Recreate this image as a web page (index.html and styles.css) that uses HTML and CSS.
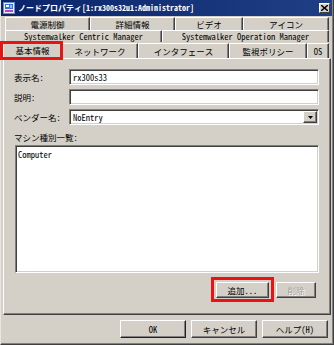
FILE: index.html
```html
<!DOCTYPE html>
<html lang="ja">

<head>
  <meta charset="UTF-8">
  <meta name="viewport" content="width=device-width, initial-scale=1.0">
  <title>ノードプロパティ</title>
  <link rel="stylesheet" href="styles.css">
</head>

<body>
  <div class="window">
    <div class="titlebar">
      <svg class="app-icon" width="12" height="12" viewBox="0 0 12 12">
        <rect x="0.5" y="0.5" width="11" height="11" fill="#e8eef8" stroke="#6a8cc8"/>
        <rect x="2" y="2" width="8" height="5" fill="#3a6ee0"/>
        <rect x="3" y="3" width="3" height="2" fill="#ffffff"/>
        <rect x="2" y="8" width="8" height="2" fill="#c040c0"/>
        <rect x="7" y="3" width="2" height="3" fill="#60d0ff"/>
      </svg>
      <span class="title">ノードプロパティ[1:rx300s32u1:Administrator]</span>
      <span class="close">
        <svg width="7" height="6" viewBox="0 0 7 6">
          <path d="M0 0 L7 6 M7 0 L0 6" stroke="#000" stroke-width="1.4"/>
        </svg>
      </span>
    </div>

    <div class="tabs">
      <div class="tab-row row-top">
        <div class="tab tab-power">電源制御</div>
        <div class="tab tab-detail">詳細情報</div>
        <div class="tab tab-video">ビデオ</div>
        <div class="tab tab-icon">アイコン</div>
      </div>
      <div class="tab-row row-mid">
        <div class="tab tab-centric">Systemwalker Centric Manager</div>
        <div class="tab tab-operation">Systemwalker Operation Manager</div>
      </div>
      <div class="tab-row row-front">
        <div class="tab tab-basic active marked">基本情報</div>
        <div class="tab tab-network">ネットワーク</div>
        <div class="tab tab-interface">インタフェース</div>
        <div class="tab tab-policy">監視ポリシー</div>
        <div class="tab tab-os">OS</div>
      </div>
    </div>

    <div class="panel">
      <div class="field">
        <label>表示名:</label>
        <div class="input">rx300s33</div>
      </div>
      <div class="field">
        <label>説明:</label>
        <div class="input"></div>
      </div>
      <div class="field">
        <label>ベンダー名:</label>
        <div class="input combo">
          <span>NoEntry</span>
          <span class="drop">
            <svg width="5" height="3" viewBox="0 0 5 3"><path d="M0 0 H5 L2.5 3 Z" fill="#000"/></svg>
          </span>
        </div>
      </div>
      <div class="list-label">マシン種別一覧:</div>
      <div class="listbox">Computer</div>
      <div class="list-actions">
        <button class="btn marked">追加...</button>
        <button class="btn disabled">削除</button>
      </div>
    </div>

    <div class="footer">
      <button class="btn btn-ok">OK</button>
      <button class="btn">キャンセル</button>
      <button class="btn">ヘルプ(H)</button>
    </div>
  </div>
</body>

</html>
```

FILE: styles.css
```css
body {
  margin: 0;
  padding: 0;
  background: #d4d0c8;
}

.window {
  width: 334px;
  height: 345px;
  box-sizing: border-box;
  background: #d4d0c8;
  border: 1px solid;
  border-top: 0;
  border-color: #d4d0c8 #404040 #404040 #e8e6e0;
  box-shadow: inset -1px -1px #808080;
  display: flex;
  flex-direction: column;
  font-family: "Noto Sans Mono CJK JP", "Noto Sans CJK JP", monospace;
  font-size: 8.5px;
  color: #000;
}

/* title bar */
.titlebar {
  height: 16px;
  margin-right: 1px;
  background: linear-gradient(90deg, #0a246a, #1f3f85);
  display: flex;
  align-items: center;
  padding-left: 2px;
  gap: 3px;
}

.title {
  flex: 1;
  color: #fff;
  font-weight: bold;
  font-size: 8px;
  line-height: 16px;
  white-space: nowrap;
}

.close {
  width: 11px;
  height: 10px;
  margin-right: 2px;
  box-sizing: border-box;
  background: #d4d0c8;
  border: 1px solid;
  border-color: #fff #404040 #404040 #fff;
  display: flex;
  align-items: center;
  justify-content: center;
}

/* tabs */
.tabs {
  margin: 1px 2px 0 2px;
  display: flex;
  flex-direction: column;
}

.tab-row {
  display: flex;
}

.row-top {
  height: 13px;
  margin-left: 2px;
}

.row-mid {
  height: 12px;
  margin-left: 2px;
}

.row-front {
  height: 16px;
}

.tab {
  box-sizing: border-box;
  border-top: 1px solid #fff;
  border-left: 1px solid #fff;
  border-right: 1px solid #404040;
  box-shadow: inset -1px 0 #808080;
  display: flex;
  align-items: center;
  justify-content: center;
  white-space: nowrap;
  line-height: 1;
}

.tab-power { width: 85px; }
.tab-detail { width: 85px; }
.tab-video { width: 68px; }
.tab-icon { width: 86px; }
.tab-centric { width: 157px; }
.tab-operation { width: 167px; }
.tab-basic { width: 59px; }
.tab-network { width: 76px; margin-top: 1px; }
.tab-interface { width: 91px; margin-top: 1px; }
.tab-policy { width: 78px; margin-top: 1px; }
.tab-os { width: 22px; margin-top: 1px; }

.tab.active {
  margin-top: -1px;
  height: 18px;
  position: relative;
  z-index: 1;
  background: #d4d0c8;
}

/* red highlight marks */
.marked {
  position: relative;
}

.marked::after {
  content: "";
  position: absolute;
  border: 3px solid #e81414;
  pointer-events: none;
}

.tab.marked::after {
  left: -4px;
  right: -2px;
  top: -1px;
  bottom: -1px;
}

.btn.marked::after {
  left: -6px;
  right: -6px;
  top: -6px;
  bottom: -5px;
}

/* panel */
.panel {
  height: 257px;
  box-sizing: border-box;
  margin: 0 2px;
  border: 1px solid;
  border-color: #fff #404040 #404040 #fff;
  box-shadow: inset -1px -1px #808080;
  padding: 10px 11px 0 10px;
  display: flex;
  flex-direction: column;
}

.field {
  display: grid;
  grid-template-columns: 55px 1fr;
  align-items: center;
  height: 16px;
  margin-bottom: 4px;
}

.field label {
  white-space: nowrap;
}

.input,
.listbox {
  box-sizing: border-box;
  background: #fff;
  border: 1px solid;
  border-color: #808080 #fff #fff #808080;
  box-shadow: inset 1px 1px #404040, inset -1px -1px #d4d0c8;
}

.input {
  height: 16px;
  padding-left: 3px;
  display: flex;
  align-items: center;
  font-size: 8.5px;
}

.combo {
  justify-content: space-between;
  padding-right: 1px;
}

.drop {
  width: 14px;
  height: 12px;
  box-sizing: border-box;
  background: #d4d0c8;
  border: 1px solid;
  border-color: #fff #404040 #404040 #fff;
  box-shadow: inset -1px -1px #808080;
  display: flex;
  align-items: center;
  justify-content: center;
}

.list-label {
  margin-top: 2px;
  height: 12px;
  line-height: 12px;
}

.listbox {
  margin-top: 2px;
  margin-left: 1px;
  height: 128px;
  padding: 3px 0 0 2px;
  line-height: 10px;
}

.list-actions {
  margin-top: 9px;
  margin-right: 3px;
  display: flex;
  justify-content: flex-end;
  gap: 7px;
}

/* buttons */
.btn {
  height: 16px;
  padding: 0;
  box-sizing: border-box;
  background: #d4d0c8;
  border: 1px solid;
  border-color: #fff #404040 #404040 #fff;
  box-shadow: inset -1px -1px #808080;
  font-family: inherit;
  font-size: 8.5px;
  color: #000;
  line-height: 1;
}

.list-actions .btn {
  width: 53px;
}

.list-actions .btn.disabled {
  width: 40px;
  color: #a09c94;
  text-shadow: 1px 1px #fff;
}

.footer {
  margin: 0 2px;
  padding: 5px 3px 0 0;
  display: flex;
  justify-content: flex-end;
  gap: 5px;
}

.footer .btn {
  width: 66px;
  height: 18px;
}

.btn-ok {
  border-color: #fff #202020 #202020 #fff;
}
```
